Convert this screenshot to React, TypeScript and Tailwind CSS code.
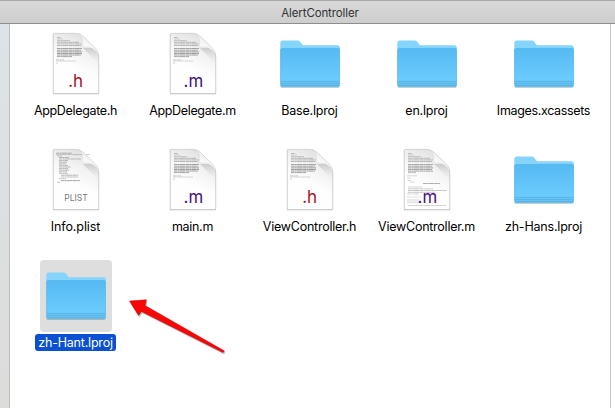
type Kind = 'h' | 'm' | 'folder' | 'plist' | 'mfull';
type Item = { name: string; kind: Kind; spacing: string; selected?: boolean };

const items: Item[] = [
  { name: 'AppDelegate.h', kind: 'h', spacing: 'tracking-[-0.34px]' },
  { name: 'AppDelegate.m', kind: 'm', spacing: 'tracking-[-0.34px]' },
  { name: 'Base.lproj', kind: 'folder', spacing: 'tracking-[-0.2px]' },
  { name: 'en.lproj', kind: 'folder', spacing: 'tracking-[-0.2px]' },
  { name: 'Images.xcassets', kind: 'folder', spacing: 'tracking-[-0.34px]' },
  { name: 'Info.plist', kind: 'plist', spacing: 'tracking-[-0.1px]' },
  { name: 'main.m', kind: 'm', spacing: 'tracking-[-0.3px]' },
  { name: 'ViewController.h', kind: 'h', spacing: 'tracking-[-0.25px]' },
  { name: 'ViewController.m', kind: 'mfull', spacing: 'tracking-[-0.25px]' },
  { name: 'zh-Hans.lproj', kind: 'folder', spacing: 'tracking-[-0.2px]' },
  { name: 'zh-Hant.lproj', kind: 'folder', spacing: 'tracking-[-0.2px]', selected: true },
];

// Each entry is one line of miniature source: x, y, width, opacity.
const header: number[][] = [
  [17, 9.5, 4, 0.4], [17, 11, 6, 0.3], [17, 12.7, 13, 0.4], [17, 14.3, 22, 0.45], [17, 15.9, 25, 0.4],
  [17, 17.5, 24, 0.45], [17, 20.5, 25, 0.6], [17, 22.2, 24, 0.6], [17, 23.9, 25, 0.7],
  [17, 25.5, 25, 0.65], [17, 27, 24, 0.65], [17, 28.6, 15, 0.6], [16, 31.8, 8, 0.3], [16, 33, 20, 0.28], [16, 35.2, 2, 0.3],
];
const implementation: number[][] = [
  [17, 9.5, 4, 0.4], [17, 11, 6, 0.3], [17, 12.7, 13, 0.4], [17, 14.3, 22, 0.4],
  [17, 15.9, 25, 0.4], [17, 17.5, 24, 0.45], [17, 20.5, 25, 0.55], [17, 22.2, 24, 0.6],
  [17, 23.9, 25, 0.65], [17, 25.5, 24, 0.6], [17, 27.1, 25, 0.6], [17, 28.6, 8, 0.45],
  [16, 31.8, 10, 0.25], [16, 34, 4, 0.25], [17, 36.5, 3, 0.25], [19, 38, 5, 0.25],
  [32, 39.5, 17, 0.55], [17, 43, 14, 0.3], [17, 44.8, 25, 0.35], [17, 46.5, 39, 0.4],
  [17, 48.3, 27, 0.4], [16, 50, 12, 0.25], [16, 53, 13, 0.2], [16, 56, 12, 0.3],
  [16, 58.2, 13, 0.3], [17, 61.5, 38, 0.3],
];
const plist: number[][] = [
  [16, 9.2, 16, 0.5], [16, 10.6, 34, 0.35], [17, 12, 5, 0.4], [19, 13.5, 10, 0.45],
  [19, 15, 22, 0.4], [19, 16.6, 9, 0.45], [19, 18.2, 8, 0.45], [19, 19.8, 7, 0.45],
  [19, 21.4, 9, 0.45], [19, 23, 12, 0.45], [19, 24.6, 9, 0.45], [19, 26.2, 10, 0.45],
  [19, 27.8, 8, 0.45], [19, 29.4, 9, 0.4], [21, 31.2, 17, 0.5], [21, 33, 17, 0.4],
  [19, 34.7, 7, 0.4], [21, 36.6, 19, 0.6], [17, 38.4, 3, 0.4],
];

function Folder() {
  return (
    <svg width="72" height="72" viewBox="0 0 72 72">
      <defs>
        <linearGradient id="folderFront" x1="0" y1="0" x2="0" y2="1">
          <stop offset="0" stopColor="#55b9f3" />
          <stop offset="0.8" stopColor="#6bcbfc" />
          <stop offset="1" stopColor="#63c1f2" />
        </linearGradient>
      </defs>
      <rect x="6.5" y="57" width="59" height="3" rx="1.5" fill="#000" opacity=".2" />
      <path d="M6.3 15 Q6.3 12.6 8.7 12.6 H23 Q25.3 12.6 26.5 14 L28.2 16.4 Q28.9 17.3 30 17.3 H63.5 Q65.8 17.3 65.8 19.5 V57 Q65.8 59 63.8 59 H8.3 Q6.3 59 6.3 57Z" fill="#84d4fc" />
      <path d="M6.3 22 Q6.3 20.2 8.2 20.2 H64 Q65.8 20.2 65.8 22 V57 Q65.8 59 63.8 59 H8.3 Q6.3 59 6.3 57Z" fill="url(#folderFront)" />
      <path d="M7 20.4H65.3" stroke="#53b1e6" strokeWidth=".6" opacity=".7" />
      <path d="M7 53.5H65.3M7 55.5H65.3M7 57.5H65.3" stroke="#50acdc" strokeWidth=".9" opacity=".75" />
      <path d="M6.8 21V57M65.5 21V57" stroke="#63b8e5" strokeWidth=".5" />
    </svg>
  );
}

function Document({ kind }: { kind: Kind }) {
  const lines = kind === 'plist' ? plist : kind === 'mfull' ? implementation : header;
  return (
    <svg width="72" height="72" viewBox="0 0 72 72">
      <defs>
        <linearGradient id="paper" x1=".7" y1="0" x2=".35" y2="1">
          <stop offset="0" stopColor="#dedede" />
          <stop offset="0.3" stopColor="#f2f2f2" />
          <stop offset="0.6" stopColor="#fefefe" />
        </linearGradient>
        <linearGradient id="curl" x1=".2" y1="1" x2=".65" y2=".3">
          <stop offset="0" stopColor="#cfcfcf" />
          <stop offset=".4" stopColor="#ffffff" />
          <stop offset="1" stopColor="#ececec" />
        </linearGradient>
        <linearGradient id="foldShade" x1="0" y1="0" x2="0" y2="1">
          <stop offset="0" stopColor="#bbb" stopOpacity=".65" />
          <stop offset="1" stopColor="#ddd" stopOpacity="0" />
        </linearGradient>
      </defs>
      <path d="M14 5.6H35C39 5.6 42 7.4 45 10.2L54.5 19.5C57.6 22.6 59 25.5 59 30V65.5H13V6.6Q13 5.6 14 5.6Z" transform="translate(0 .8)" fill="#000" opacity=".26" />
      <path d="M14 5.4H35C39 5.4 42 7.2 45 10L54.5 19.3C57.6 22.4 58.8 25.5 58.8 30V64.5Q58.8 65.5 57.8 65.5H14.2Q13.2 65.5 13.2 64.5V6.4Q13.2 5.4 14 5.4Z" fill="url(#paper)" stroke="#c4c4c4" strokeWidth=".7" />
      {lines.map(([x, y, w, o], i) => (
        <path key={i} d={`M${x} ${y}h${w}`} stroke="#555" strokeWidth=".85" strokeDasharray="3.6 .25 1.9 .2 5.3 .3" opacity={o} />
      ))}
      <path d="M43 20H54C57 22.5 58.4 25.5 58.4 30V36Z" fill="url(#foldShade)" />
      <path d="M38 5.6C42 7 42.8 10 42.8 18.8C51 18.2 56 21.5 58.6 27C58.2 23.5 56.4 21.2 54.5 19.3L45 10C42.5 7.7 40.6 6.2 38 5.6Z" fill="url(#curl)" stroke="#cfcfcf" strokeWidth=".35" />
      {kind === 'plist' ? (
        <text x="24.2" y="57.4" textLength="23.5" lengthAdjust="spacingAndGlyphs" fontSize="9.5" fill="#777" fontFamily="Inter, sans-serif">PLIST</text>
      ) : kind === 'h' ? (
        <text x="28.2" y="59.3" textLength="15" lengthAdjust="spacingAndGlyphs" fontSize="17.5" fill="#a61426" fontFamily="Inter, sans-serif">.h</text>
      ) : (
        <text x="26.6" y="59.3" textLength="19.6" lengthAdjust="spacingAndGlyphs" fontSize="17" fill="#431082" fontFamily="Inter, sans-serif">.m</text>
      )}
    </svg>
  );
}

export default function App() {
  return (
    <div className="relative flex h-[408px] w-[615px] flex-col overflow-hidden bg-white font-['Inter',sans-serif]">
      <header className="flex h-6 shrink-0 items-center justify-center border-t border-b border-t-[#a8a8a8] border-b-[#8d8d8d] bg-linear-to-b from-[#d8d8d8] to-[#cecece] pt-px pl-[25px] text-[11.5px] leading-4 tracking-[-0.12px] text-[#333]">
        <h1>AlertController</h1>
      </header>
      <div className="flex min-h-0 flex-1">
        <aside className="w-[10px] shrink-0 border-r border-[#bcbcbc] bg-linear-to-b from-[#dde3e8] to-[#dcdcda]" />
        <main className="grid flex-1 auto-rows-[116px] grid-cols-[repeat(5,117px)] pt-1 pl-[7px]">
          {items.map((item) => (
            <div key={item.name} className="flex flex-col items-center">
              <div className={`h-[72px] w-[72px] rounded-[4px] ${item.selected ? 'bg-[#dedede]' : ''}`}>
                {item.kind === 'folder' ? <Folder /> : <Document kind={item.kind} />}
              </div>
              <span className={`mt-[2px] h-[17px] rounded-[3px] px-[3px] pt-px text-[12.5px] leading-4 whitespace-nowrap ${item.spacing} ${item.selected ? 'bg-[#0a50d0] text-white' : 'text-black'}`}>
                {item.name}
              </span>
            </div>
          ))}
        </main>
        <div className="w-[5px] shrink-0 border-l border-[#c4c4c4] bg-white" />
      </div>
      <svg className="absolute top-[290px] left-[120px]" width="115" height="72" viewBox="120 290 115 72">
        <path d="M129.5 301L146.5 299.8L145 305.5L224.5 351L223 352.5L141.5 311.5L138.5 315.5Z" transform="translate(1 1.8)" fill="#000" opacity=".25" />
        <path d="M129.5 301L146.5 299.8L145 305.5L224.5 351L223 352.5L141.5 311.5L138.5 315.5Z" fill="#fb0505" stroke="#b90505" strokeWidth=".5" />
      </svg>
    </div>
  );
}
